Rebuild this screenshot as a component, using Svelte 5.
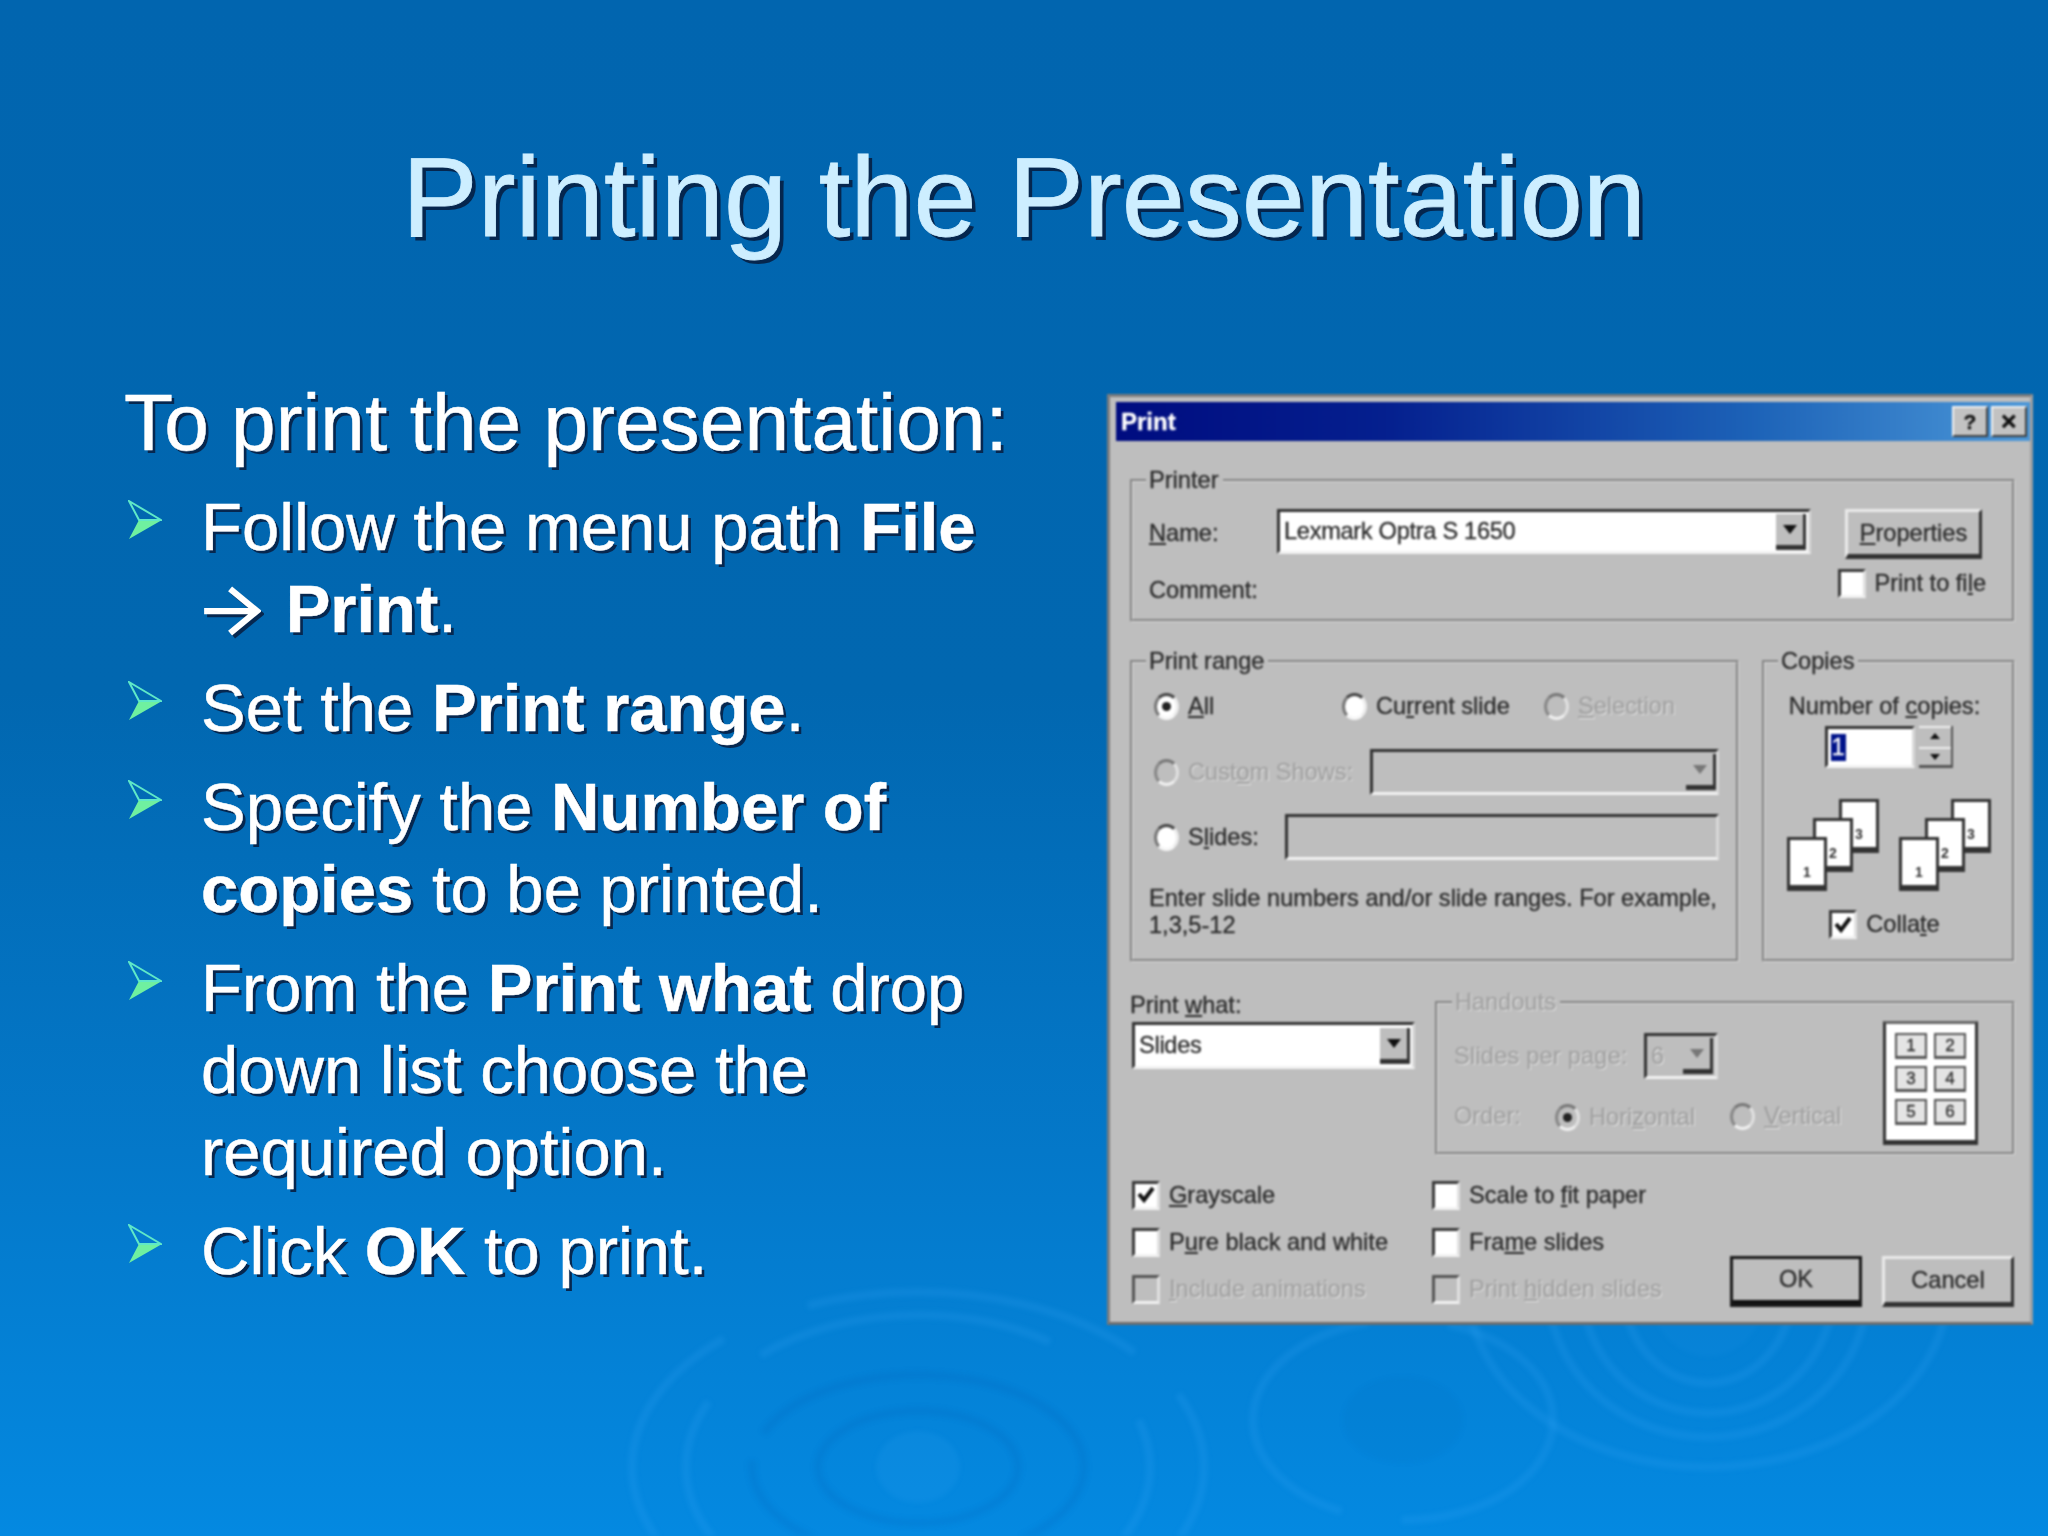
<script>
  const steps = [
    { lines: ['Follow the menu path ', '*File', ' ', '>', ' ', '*Print', '.'] },
    { lines: ['Set the ', '*Print range', '.'] },
    { lines: ['Specify the ', '*Number of copies', ' to be printed.'] },
    { lines: ['From the ', '*Print what', ' drop down list choose the required option.'] },
    { lines: ['Click ', '*OK', ' to print.'] }
  ];

  const printRows = [
    { label: 'Grayscale', key: 'G', checked: true },
    { label: 'Scale to fit paper', key: 'f' },
    { label: 'Pure black and white', key: 'u' },
    { label: 'Frame slides', key: 'm' },
    { label: 'Include animations', key: 'I', disabled: true },
    { label: 'Print hidden slides', key: 'h', disabled: true }
  ];

  const cells = [1, 2, 3, 4, 5, 6];
  const rings = [
    { cx: 918, cy: 1467, rx: 286, ry: 175, dash: '340 60 500 90', light: true },
    { cx: 918, cy: 1467, rx: 232, ry: 152, dash: '300 120 260 70', light: true },
    { cx: 918, cy: 1467, rx: 166, ry: 92, dash: '420 30' },
    { cx: 918, cy: 1467, rx: 100, ry: 56, dash: '500 40' },
    { cx: 1403, cy: 1420, rx: 150, ry: 100, dash: '200 60 300 80', light: true },
    { cx: 1708, cy: 1287, rx: 240, ry: 180, light: true },
    { cx: 1708, cy: 1287, rx: 160, ry: 150, light: true },
    { cx: 1708, cy: 1287, rx: 126, ry: 126, light: true },
    { cx: 1708, cy: 1287, rx: 85, ry: 96, light: true }
  ];

  // "Name" -> ["", "N", "ame"], so the access key can be underlined
  const splitKey = (label, key) => {
    const at = key ? label.indexOf(key) : -1;
    if (at < 0) return [label, '', ''];
    return [label.slice(0, at), key, label.slice(at + 1)];
  };
</script>

{#snippet keyed(label, key)}
  {@const parts = splitKey(label, key)}
  <span>{parts[0]}<u>{parts[1]}</u>{parts[2]}</span>
{/snippet}

{#snippet check(label, key, checked, disabled)}
  <span class="opt" class:disabled>
    <span class="box">
      {#if checked}
        <svg viewBox="0 0 22 22" width="22" height="22"><path d="M4 10 L9 16 L18 4" fill="none" stroke="#111" stroke-width="4" /></svg>
      {/if}
    </span>
    <span class="opt-label">{@render keyed(label, key)}</span>
  </span>
{/snippet}

{#snippet radio(label, key, selected, disabled)}
  <span class="opt" class:disabled>
    <span class="dot" class:selected></span>
    <span class="opt-label">{@render keyed(label, key)}</span>
  </span>
{/snippet}

{#snippet arrowBtn(dim)}
  <span class="drop" class:dim><i></i></span>
{/snippet}

{#snippet sheets()}
  <svg class="stack" viewBox="0 0 92 92" width="92" height="92">
    {#each [3, 2, 1] as n}
      {@const x = (n - 1) * 26}
      {@const y = (3 - n) * 19}
      <rect x={x + 1.5} y={y + 1.5} width="37" height="51" fill="#fff" stroke="#333" stroke-width="3" />
      <rect x={x} y={y + 48} width="40" height="6" fill="#333" />
      <text x={x + 20} y={y + 40} text-anchor="middle" class="sheet-no">{n}</text>
    {/each}
  </svg>
{/snippet}

<main class="slide">
  <svg class="ripples" viewBox="0 0 2048 1536" width="2048" height="1536" aria-hidden="true">
    {#each rings as r}
      <ellipse cx={r.cx} cy={r.cy} rx={r.rx} ry={r.ry} fill="none" stroke-width="8" stroke-dasharray={r.dash}
        stroke={r.light ? 'rgba(70,175,255,0.15)' : 'rgba(0,70,150,0.09)'} />
    {/each}
    <ellipse cx="918" cy="1467" rx="42" ry="36" fill="rgba(70,175,255,0.1)" />
    <ellipse cx="1403" cy="1420" rx="60" ry="43" fill="rgba(0,70,150,0.05)" />
    <ellipse cx="1708" cy="1287" rx="60" ry="70" fill="rgba(70,175,255,0.06)" />
  </svg>

  <h1>Printing the Presentation</h1>

  <div class="content">
    <section class="notes">
      <p class="lead">To print the presentation:</p>
      <ul>
        {#each steps as step}
          <li>
            <svg class="bullet" viewBox="0 0 34 40" width="34" height="40">
              <path d="M1 20 L11 20 L1 39 L34 20 Z" fill="#6ff0a0" />
              <path d="M1 1 L33 20 L11 20 Z" fill="none" stroke="#5fe8c8" stroke-width="2" />
            </svg>
            <span class="step-text">
              {#each step.lines as bit}
                {#if bit === '>'}
                  <svg class="path-arrow" viewBox="0 0 60 52" width="58" height="50" role="img" aria-label="then">
                    <path d="M1 26 H54 M28 3 L56 26 L28 49" fill="none" stroke="#fff" stroke-width="6.5" />
                  </svg>
                {:else if bit.startsWith('*')}
                  <strong>{bit.slice(1)}</strong>
                {:else}
                  {bit}
                {/if}
              {/each}
            </span>
          </li>
        {/each}
      </ul>
    </section>

    <div class="dialog">
      <div class="titlebar">
        <span>Print</span>
        <div class="caption-btns">
          <span class="cap">?</span>
          <span class="cap">✕</span>
        </div>
      </div>

      <div class="dialog-body">
        <fieldset class="printer">
          <legend>Printer</legend>
          <div class="name-row">
            <span class="name-label">{@render keyed('Name:', 'N')}</span>
            <span class="field combo wide">
              <span class="value">Lexmark Optra S 1650</span>
              {@render arrowBtn(false)}
            </span>
            <span class="btn props">{@render keyed('Properties', 'P')}</span>
          </div>
          <div class="comment-row">
            <span class="comment">Comment:</span>
            <span class="to-file">{@render check('Print to file', 'l', false, false)}</span>
          </div>
        </fieldset>

        <div class="mid">
          <fieldset class="range">
            <legend>Print range</legend>
            <div class="range-a">
              {@render radio('All', 'A', true, false)}
              {@render radio('Current slide', 'r', false, false)}
              {@render radio('Selection', 'S', false, true)}
            </div>
            <div class="range-b">
              {@render radio('Custom Shows:', 'o', false, true)}
              <span class="field combo grey">
                {@render arrowBtn(true)}
              </span>
            </div>
            <div class="range-c">
              {@render radio('Slides:', 'l', false, false)}
              <span class="field grey"></span>
            </div>
            <p class="hint">Enter slide numbers and/or slide ranges. For example,<br />1,3,5-12</p>
          </fieldset>

          <fieldset class="copies">
            <legend>Copies</legend>
            <div class="copies-label">{@render keyed('Number of copies:', 'c')}</div>
            <div class="spinner">
              <span class="field count"><b>1</b></span>
              <span class="spin">
                <span class="spin-up"><i></i></span>
                <span class="spin-down"><i></i></span>
              </span>
            </div>
            <div class="stacks">
              {@render sheets()}
              {@render sheets()}
            </div>
            <div class="collate">{@render check('Collate', 't', true, false)}</div>
          </fieldset>
        </div>

        <div class="what">
          <div class="what-col">
            <div class="what-label">{@render keyed('Print what:', 'w')}</div>
            <span class="field combo what-combo">
              <span class="value">Slides</span>
              {@render arrowBtn(false)}
            </span>
          </div>
          <fieldset class="handouts">
            <legend class="off">Handouts</legend>
            <div class="handouts-inner">
              <div>
                <div class="per-page off">
                  <span class="per-label">Slides per page:</span>
                  <span class="field combo small">
                    <span class="value">6</span>
                    {@render arrowBtn(true)}
                  </span>
                </div>
                <div class="order">
                  <span class="order-label off">Order:</span>
                  <span class="order-h">{@render radio('Horizontal', 'z', true, true)}</span>
                  {@render radio('Vertical', 'V', false, true)}
                </div>
              </div>
              <div class="preview">
                {#each cells as n}
                  <span class="cell">{n}</span>
                {/each}
              </div>
            </div>
          </fieldset>
        </div>

        <div class="bottom">
          <div class="checks">
            {#each printRows as row}
              {@render check(row.label, row.key, row.checked, row.disabled)}
            {/each}
          </div>
          <div class="actions">
            <span class="btn ok">OK</span>
            <span class="btn cancel">Cancel</span>
          </div>
        </div>
      </div>
    </div>
  </div>
</main>

<style>
  :global(body) {
    margin: 0;
  }

  .slide {
    position: relative;
    width: 2048px;
    height: 1536px;
    overflow: hidden;
    padding-top: 132px;
    box-sizing: border-box;
    background: linear-gradient(180deg, #0165af 0%, #0167b0 45%, #0478c9 75%, #0489e1 100%);
    font-family: "Liberation Sans", Arial, sans-serif;
    color: #fff;
  }

  .ripples {
    position: absolute;
    left: 0;
    top: 0;
    filter: blur(2.5px);
  }

  h1 {
    position: relative;
    margin: 0;
    font-size: 113.6px;
    line-height: 130px;
    font-weight: 400;
    text-align: center;
    color: #cdeeff;
    -webkit-text-stroke: 0.8px #cdeeff;
    text-shadow: 4px 4px 0 #05264e;
  }

  .content {
    position: relative;
    display: flex;
    align-items: flex-start;
    padding-top: 115px;
  }

  .notes {
    flex: 0 0 1107px;
    box-sizing: border-box;
    padding-left: 124px;
    -webkit-text-stroke: 0.5px #fff;
    text-shadow: 3px 3px 0 #06274f;
  }

  .lead {
    margin: 0 0 19px;
    font-size: 80.3px;
    line-height: 90px;
    white-space: nowrap;
  }

  ul {
    margin: 0;
    padding: 0;
    list-style: none;
    font-size: 67px;
    line-height: 82px;
  }

  li {
    display: flex;
    align-items: flex-start;
    margin-bottom: 17px;
  }

  .bullet {
    flex: none;
    margin: 14px 39px 0 4px;
  }

  .step-text {
    width: 790px;
  }

  .path-arrow {
    vertical-align: -4px;
    margin: 0 6px 0 2px;
    filter: drop-shadow(3px 3px 0 #06274f);
  }

  .dialog {
    flex: none;
    width: 926px;
    height: 931px;
    margin-top: 17px;
    box-sizing: border-box;
    border: 3px solid #7d7d7d;
    border-right-color: #a0a0a0;
    border-bottom-color: #6d6d6d;
    padding: 5px 0 0 6px;
    background: #bebebe;
    color: #2b2b2b;
    font-size: 23.6px;
    line-height: 27px;
    -webkit-text-stroke: 0.3px currentColor;
    filter: blur(0.9px);
  }

  .titlebar {
    display: flex;
    justify-content: space-between;
    align-items: center;
    height: 39px;
    padding: 0 3px 0 5px;
    background: linear-gradient(90deg, #000c80 0%, #05208f 30%, #1d63b8 70%, #4b97d8 100%);
    color: #fff;
    font-weight: 700;
    font-size: 24px;
  }

  .caption-btns {
    display: flex;
    gap: 3px;
  }

  .cap {
    width: 32px;
    height: 27px;
    display: grid;
    place-items: center;
    background: #c2c2c2;
    border: 2px solid;
    border-color: #f0f0f0 #404040 #404040 #f0f0f0;
    color: #111;
    font-size: 21px;
    font-weight: 700;
  }

  .dialog-body {
    padding: 27px 15px 0 14px;
  }

  fieldset {
    margin: 0;
    padding: 0;
    min-width: 0;
    box-sizing: border-box;
    border: 3px groove #d8d8d8;
  }

  legend {
    height: 24px;
    margin-left: 13px;
    padding: 0 4px 0 3px;
    line-height: 24px;
  }

  u {
    text-decoration-thickness: 2px;
    text-underline-offset: 2px;
  }

  .printer {
    height: 154px;
  }

  .name-row {
    display: flex;
    align-items: flex-start;
    padding: 17px 0 0 16px;
  }

  .name-label {
    width: 128px;
    padding-top: 11px;
  }

  .field {
    display: flex;
    align-items: center;
    box-sizing: border-box;
    border: 3px solid;
    border-color: #333 #d8d8d8 #f2f2f2 #333;
    background: #fff;
  }

  .field.grey {
    background: #bebebe;
    height: 46px;
    width: 434px;
  }

  .combo {
    justify-content: space-between;
    padding: 0 2px 0 4px;
  }

  .value {
    white-space: nowrap;
    letter-spacing: -0.3px;
  }

  .wide {
    width: 534px;
    height: 45px;
  }

  .drop {
    flex: none;
    width: 30px;
    height: 36px;
    display: grid;
    place-items: center;
    background: #bebebe;
    border-right: 3px solid #333;
    border-bottom: 5px solid #333;
    box-sizing: border-box;
  }

  .drop i {
    width: 0;
    height: 0;
    border: 7px solid transparent;
    border-top: 9px solid #111;
    border-bottom: 0;
  }

  .drop.dim i {
    border-top-color: #777;
  }

  .btn {
    display: grid;
    place-items: center;
    box-sizing: border-box;
    border: 3px solid;
    border-color: #eaeaea #333 #333 #eaeaea;
    border-bottom-width: 5px;
    background: #bebebe;
    white-space: nowrap;
  }

  .props {
    width: 137px;
    height: 50px;
    margin-left: 34px;
  }

  .comment-row {
    display: flex;
    justify-content: space-between;
    align-items: center;
    padding: 12px 0 0 16px;
    margin-top: -2px;
  }

  .comment {
    margin-top: 7px;
  }

  .to-file {
    margin-right: 26px;
  }

  .opt {
    display: inline-flex;
    align-items: center;
    gap: 9px;
    white-space: nowrap;
  }

  .opt.disabled,
  .off {
    color: #a2a2a2;
    text-shadow: 1px 1px 0 #e6e6e6;
  }

  .box {
    flex: none;
    width: 28px;
    height: 29px;
    box-sizing: border-box;
    display: grid;
    place-items: center;
    border: 3px solid;
    border-color: #3a3a3a #e0e0e0 #f2f2f2 #3a3a3a;
    background: #fff;
  }

  .disabled .box {
    background: #bebebe;
    border-color: #555 #e0e0e0 #f2f2f2 #555;
  }

  .dot {
    flex: none;
    width: 25px;
    height: 27px;
    box-sizing: border-box;
    display: grid;
    place-items: center;
    border-radius: 50%;
    border: 3px solid;
    border-color: #444 #ececec #f6f6f6 #777;
    background: #fff;
  }

  .disabled .dot {
    background: #bebebe;
    border-color: #777 #e0e0e0 #f0f0f0 #888;
  }

  .dot.selected::after {
    content: '';
    width: 9px;
    height: 9px;
    border-radius: 50%;
    background: #222;
  }

  .mid {
    display: grid;
    grid-template-columns: 609px 253px;
    justify-content: space-between;
    margin-top: 27px;
  }

  .range,
  .copies {
    height: 313px;
  }

  .range-a {
    display: grid;
    grid-template-columns: 188px 202px auto;
    padding: 20px 0 0 21px;
  }

  .range-b {
    display: grid;
    grid-template-columns: 216px 349px;
    align-items: center;
    margin-top: 29px;
    padding-left: 21px;
  }

  .range-b .grey {
    width: 349px;
    padding-right: 0;
    justify-content: flex-end;
  }

  .range-c {
    display: grid;
    grid-template-columns: 131px 434px;
    align-items: center;
    margin-top: 19px;
    padding-left: 21px;
  }

  .hint {
    margin: 25px 0 0 16px;
    white-space: nowrap;
  }

  .copies {
    display: flex;
    flex-direction: column;
    align-items: center;
  }

  .copies-label {
    margin: 20px 8px 0 0;
    white-space: nowrap;
  }

  .spinner {
    display: flex;
    gap: 4px;
    margin-top: 6px;
  }

  .count {
    width: 90px;
    height: 42px;
    padding-left: 3px;
  }

  .count b {
    width: 15px;
    background: #00138a;
    color: #fff;
    font-weight: 400;
    text-align: center;
  }

  .spin {
    width: 34px;
    display: grid;
    grid-template-rows: 1fr 1fr;
    gap: 2px;
    background: #bebebe;
    border-right: 2px solid #555;
    border-bottom: 3px solid #555;
    box-sizing: border-box;
  }

  .spin-up,
  .spin-down {
    display: grid;
    place-items: center;
    border-top: 2px solid #eee;
  }

  .spin-up i,
  .spin-down i {
    width: 0;
    height: 0;
    border: 5px solid transparent;
  }

  .spin-up i {
    border-bottom: 6px solid #111;
    border-top: 0;
  }

  .spin-down i {
    border-top: 6px solid #111;
    border-bottom: 0;
  }

  .stacks {
    display: flex;
    gap: 20px;
    margin-top: 31px;
  }

  .sheet-no {
    font-size: 14px;
    font-weight: 700;
    fill: #333;
  }

  .collate {
    margin: 19px 8px 0 0;
  }

  .what {
    display: grid;
    grid-template-columns: 305px 580px;
    margin-top: 28px;
  }

  .what-label {
    margin-top: 2px;
  }

  .what-combo {
    width: 283px;
    height: 47px;
    margin: 3px 0 0 2px;
  }

  .handouts {
    height: 165px;
  }

  legend.off {
    margin-left: 14px;
  }

  .handouts-inner {
    display: flex;
    justify-content: space-between;
    padding: 0 34px 0 16px;
  }

  .per-page {
    display: flex;
    align-items: center;
    margin-top: 19px;
  }

  .per-label {
    width: 190px;
    letter-spacing: 0.2px;
    white-space: nowrap;
  }

  .small {
    width: 74px;
    height: 46px;
    background: #bebebe;
  }

  .order {
    display: flex;
    align-items: center;
    margin-top: 22px;
  }

  .order-label {
    width: 101px;
  }

  .order-h {
    width: 175px;
  }

  .preview {
    width: 95px;
    height: 124px;
    margin-top: 7px;
    box-sizing: border-box;
    display: grid;
    grid-template-columns: 32px 32px;
    grid-auto-rows: 26px;
    justify-content: center;
    align-content: start;
    gap: 7px 7px;
    padding-top: 9px;
    border: 3px solid #333;
    border-bottom-width: 5px;
    border-top-color: #666;
    background: #fff;
  }

  .cell {
    display: grid;
    place-items: center;
    box-sizing: border-box;
    border: 2px solid #555;
    border-bottom-width: 3px;
    font-size: 17px;
    line-height: 1;
    background: #e4e4e4;
  }

  .bottom {
    display: flex;
    justify-content: space-between;
    align-items: flex-end;
    margin-top: 25px;
    margin-right: 1px;
  }

  .checks {
    display: grid;
    grid-template-columns: 300px auto;
    grid-auto-rows: 30px;
    row-gap: 17px;
    padding-left: 2px;
  }

  .actions {
    display: flex;
    gap: 20px;
    margin-bottom: -3px;
  }

  .actions .btn {
    width: 132px;
    height: 51px;
  }

  .ok {
    outline: 3px solid #1a1a1a;
    outline-offset: -3px;
    border-bottom: 7px solid #111;
  }
</style>
